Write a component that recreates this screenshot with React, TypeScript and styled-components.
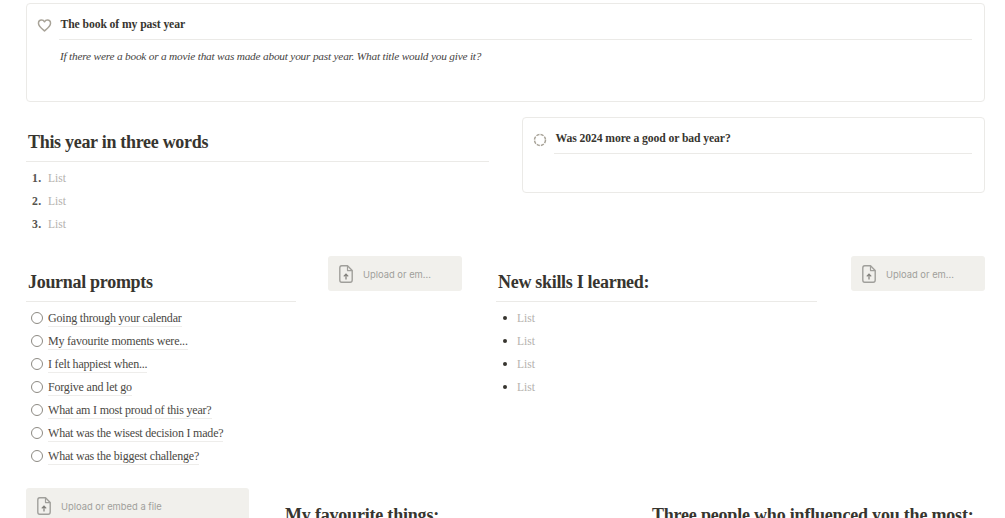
import styled, { createGlobalStyle } from "styled-components";

const SERIF = '"Liberation Serif", "Noto Serif", serif';

const JOURNAL_PROMPTS = [
  "Going through your calendar",
  "My favourite moments were...",
  "I felt happiest when...",
  "Forgive and let go",
  "What am I most proud of this year?",
  "What was the wisest decision I made?",
  "What was the biggest challenge?",
];

const GlobalStyle = createGlobalStyle`
  html, body {
    margin: 0;
    padding: 0;
    height: 518px;
    overflow: hidden;
    background: #fff;
    font-family: ${SERIF};
    color: #37352f;
  }
`;

function HeartIcon() {
  return (
    <CalloutIcon width="15" height="13" viewBox="0 0 15 14" fill="none">
      <path
        d="M7.5 12.8C5.6 11.2 1 8.2 1 4.7C1 2.6 2.6 1.1 4.4 1.1C5.7 1.1 6.9 1.9 7.5 3C8.1 1.9 9.3 1.1 10.6 1.1C12.4 1.1 14 2.6 14 4.7C14 8.2 9.4 11.2 7.5 12.8Z"
        stroke="#a8a398"
        strokeWidth="1.6"
        strokeLinejoin="round"
      />
    </CalloutIcon>
  );
}

function DashedCircleIcon() {
  return (
    <CalloutIcon width="14" height="14" viewBox="0 0 14 14" fill="none">
      <circle cx="7" cy="7" r="5.5" stroke="#a8a398" strokeWidth="1.5" strokeDasharray="3.2 1.1" />
    </CalloutIcon>
  );
}

function FileUploadIcon() {
  return (
    <svg width="14" height="18" viewBox="0 0 14 18" fill="none">
      <path
        d="M2.6 0.8H8.5L13.2 5.6V15C13.2 16.2 12.4 17.2 11.2 17.2H2.6C1.5 17.2 0.8 16.2 0.8 15V3C0.8 1.8 1.5 0.8 2.6 0.8Z"
        stroke="#a09f9b"
        strokeWidth="1.4"
        strokeLinejoin="round"
      />
      <path d="M8.5 0.8V5.6H13.2" stroke="#a09f9b" strokeWidth="1.2" strokeLinejoin="round" />
      <path d="M7 14.4V9.2M4.8 11.3L7 9.1L9.2 11.3" stroke="#807f7b" strokeWidth="1.2" />
    </svg>
  );
}

function Upload({ label, $wide }: { label: string; $wide?: boolean }) {
  return (
    <UploadBox $wide={$wide}>
      <FileUploadIcon />
      <UploadLabel>{label}</UploadLabel>
    </UploadBox>
  );
}

export default function App() {
  return (
    <Page>
      <GlobalStyle />
      <Callout $tall>
        <HeartIcon />
        <CalloutBody>
          <CalloutTitle>The book of my past year</CalloutTitle>
          <CalloutNote>
            If there were a book or a movie that was made about your past year. What title would you give it?
          </CalloutNote>
        </CalloutBody>
      </Callout>

      <WordsRow>
        <WordsColumn>
          <Heading>This year in three words</Heading>
          <ListBlock>
            {[1, 2, 3].map((n) => (
              <ListRow key={n}>
                <Marker>{n}.</Marker>
                <Placeholder>List</Placeholder>
              </ListRow>
            ))}
          </ListBlock>
        </WordsColumn>
        <Callout>
          <DashedCircleIcon />
          <CalloutBody>
            <CalloutTitle>Was 2024 more a good or bad year?</CalloutTitle>
          </CalloutBody>
        </Callout>
      </WordsRow>

      <PromptsRow>
        <PromptsColumn>
          <Heading>Journal prompts</Heading>
          <ListBlock>
            {JOURNAL_PROMPTS.map((prompt) => (
              <ListRow key={prompt}>
                <Ring />
                <PromptText>{prompt}</PromptText>
              </ListRow>
            ))}
          </ListBlock>
        </PromptsColumn>
        <Upload label="Upload or em..." />
        <SkillsColumn>
          <Heading>New skills I learned:</Heading>
          <ListBlock>
            {[0, 1, 2, 3].map((n) => (
              <ListRow key={n}>
                <Bullet />
                <Placeholder>List</Placeholder>
              </ListRow>
            ))}
          </ListBlock>
        </SkillsColumn>
        <Upload label="Upload or em..." />
      </PromptsRow>

      <BottomRow>
        <Upload label="Upload or embed a file" $wide />
        <BottomHeading>My favourite things:</BottomHeading>
        <BottomHeading>Three people who influenced you the most:</BottomHeading>
      </BottomRow>
    </Page>
  );
}

const Page = styled.div`
  width: 1005px;
  height: 518px;
  overflow: hidden;
  box-sizing: border-box;
  padding: 3px 20px 0 26px;
`;

const Callout = styled.div<{ $tall?: boolean }>`
  box-sizing: border-box;
  flex: 0 0 463px;
  height: ${(p) => (p.$tall ? "99px" : "76px")};
  display: flex;
  align-items: flex-start;
  gap: 7px;
  padding: 15px 12px 0 10px;
  border: 1px solid #ebeae7;
  border-radius: 4px;
`;

const CalloutIcon = styled.svg`
  flex: none;
`;

const CalloutBody = styled.div`
  flex: 1;
  min-width: 0;
`;

const CalloutTitle = styled.div`
  height: 20px;
  line-height: 12px;
  padding-left: 1.5px;
  font-size: 11.7px;
  font-weight: 700;
  letter-spacing: -0.1px;
  white-space: nowrap;
  border-bottom: 1px solid #ebeae7;
  margin-bottom: 9px;
`;

const CalloutNote = styled.div`
  padding-left: 1px;
  font-size: 11.3px;
  line-height: 14px;
  font-style: italic;
  letter-spacing: -0.2px;
  white-space: nowrap;
  color: #46443f;
`;

const WordsRow = styled.div`
  display: flex;
  justify-content: space-between;
  align-items: flex-start;
  margin-top: 15px;
  height: 139px;
`;

const WordsColumn = styled.div`
  width: 463px;
`;

const Heading = styled.h2`
  margin: 0;
  padding: 15px 2px 8px;
  height: 21px;
  line-height: 21px;
  font-size: 18px;
  font-weight: 700;
  letter-spacing: -0.3px;
  white-space: nowrap;
  color: #37352f;
  border-bottom: 1px solid #ebeae7;
`;

const ListBlock = styled.div`
  display: flex;
  flex-direction: column;
  gap: 5px;
  padding-top: 7px;
`;

const ListRow = styled.div`
  display: flex;
  align-items: center;
  height: 18px;
  padding-left: 6px;
`;

const Marker = styled.span`
  width: 16px;
  font-size: 11.7px;
  font-weight: 700;
  letter-spacing: 0.3px;
  color: #55534e;
`;

const Placeholder = styled.span`
  font-size: 11.5px;
  color: #b4b2ae;
`;

const Ring = styled.span`
  box-sizing: border-box;
  flex: none;
  width: 12px;
  height: 12px;
  margin: 0 5px 0 -1px;
  border: 1.2px solid #8d8a83;
  border-radius: 50%;
`;

const PromptText = styled.span`
  padding-top: 2px;
  font-size: 12px;
  line-height: 15px;
  letter-spacing: -0.2px;
  white-space: nowrap;
  color: #4a4843;
  border-bottom: 1px solid #eeedeb;
`;

const Bullet = styled.span`
  flex: none;
  width: 4px;
  height: 4px;
  margin: 0 10px 1px 1px;
  background: #37352f;
  border-radius: 50%;
`;

const PromptsRow = styled.div`
  display: flex;
  align-items: flex-start;
  height: 232px;
`;

const PromptsColumn = styled.div`
  width: 270px;
  margin-right: 32px;
  padding-top: 1px;
`;

const SkillsColumn = styled.div`
  width: 321px;
  margin: 0 34px;
  padding-top: 1px;
`;

const UploadBox = styled.div<{ $wide?: boolean }>`
  box-sizing: border-box;
  flex: none;
  width: ${(p) => (p.$wide ? "223px" : "134px")};
  height: 35px;
  display: flex;
  align-items: center;
  gap: 10px;
  padding-left: 11px;
  background: #f1f0ec;
  border-radius: 3px;
`;

const UploadLabel = styled.span`
  padding-top: 1px;
  font-family: Inter, "Liberation Sans", sans-serif;
  font-size: 9.4px;
  color: #a09f9b;
`;

const BottomRow = styled.div`
  display: grid;
  grid-template-columns: 258px 367px 1fr;
  align-items: start;
`;

const BottomHeading = styled.h2`
  margin: 17px 0 0;
  padding-left: 1px;
  font-size: 18px;
  line-height: 21px;
  font-weight: 700;
  letter-spacing: -0.2px;
  white-space: nowrap;
  color: #37352f;
`;
